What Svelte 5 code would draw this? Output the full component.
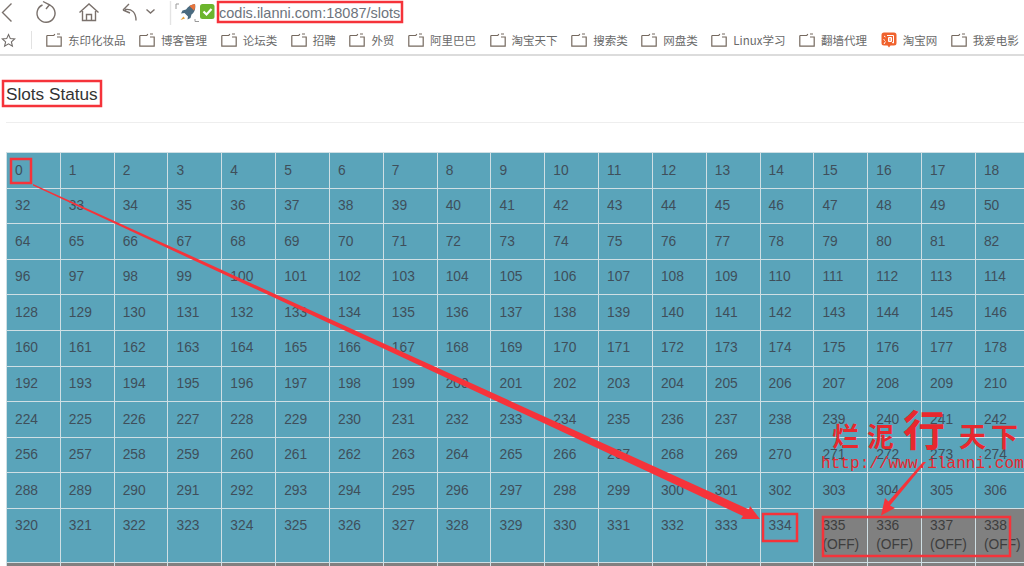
<script>
  const bookmarks = [
    { label: '东印化妆品' },
    { label: '博客管理' },
    { label: '论坛类' },
    { label: '招聘' },
    { label: '外贸' },
    { label: '阿里巴巴' },
    { label: '淘宝天下' },
    { label: '搜索类' },
    { label: '网盘类' },
    { label: 'Linux学习' },
    { label: '翻墙代理' },
    { label: '淘宝网', taobao: true },
    { label: '我爱电影' }
  ];

  const COLS = 32;
  const VISIBLE = 19;
  const LAST_ON = 334;

  // only the first 19 columns fit in the window
  const rows = [];
  for (let r = 0; r < 12; r++) {
    const cells = [];
    for (let c = 0; c < VISIBLE; c++) {
      const slot = r * COLS + c;
      cells.push({ slot, off: slot > LAST_ON });
    }
    rows.push(cells);
  }
</script>

<div class="page">
  <header class="toolbar">
    <svg class="nav" width="225" height="26" viewBox="0 0 225 26" fill="none" stroke="#7a716c" stroke-width="1.4">
      <path d="M11.500 3.500 2.500 12.500 11.500 21.500" />
      <path d="M49 4.800a9 9 0 1 1-6.500 .2" />
      <path d="M43 1.500 49.500 4.800 46 9" />
      <path d="M79.500 12.500 89 4l9.500 8.500M82.500 11v9.500h13V11M86.500 20.500v-6h5v6" />
      <path d="M123 10l6-6M123 10l7 3M125 9.500c7-1 11 3 11 11" />
      <path d="M146.500 9.500l4 3.500 4-3.500" />
      <path d="M170.500 1v24" stroke="#e4e4e4" />
      <path d="M176 9V4h3M195 19v2.500h4" stroke="#999" stroke-width="1" />
      <path d="M195 4c-4 .5-7 2.500-9 5.500l-3.500 1-1.500 3 3.500-.5 3.500 3.500-.5 3 3-1.500 1-3.500c3-2 4.500-6 3.500-10.500z" fill="#4a6b80" stroke="none" />
      <path d="M195 4c-2 .2-4 1-5.500 2l4.500 4.500c1-1.500 1.300-4 1-6.500z" fill="#e8743b" stroke="none" />
      <path d="M183.500 16.500l-3 3.500 4.500-1.500z" fill="#e8a03b" stroke="none" />
      <rect x="200" y="4" width="14.500" height="15" rx="2.500" fill="#6cb52d" stroke="none" />
      <path d="M203.500 11.500l3 3 5-5.500" stroke="#fff" stroke-width="2.200" />
    </svg>
    <span class="url">codis.ilanni.com:18087/slots</span>
  </header>

  <nav class="bookmarks">
    <svg class="star" width="15" height="15" viewBox="0 0 15 15" fill="none" stroke="#6f6a67" stroke-width="1.100">
      <path d="M7.500 1.500 9.300 5.600l4.400.4-3.300 2.900 1 4.300-3.900-2.300-3.900 2.300 1-4.300L1.300 6l4.400-.4z" />
    </svg>
    <span class="divider"></span>
    {#each bookmarks as mark}
      <span class="mark">
        {#if mark.taobao}
          <svg width="16" height="16" viewBox="0 0 16 16">
            <path d="M3 .5h10a2.500 2.500 0 0 1 2.500 2.500v8a2.500 2.500 0 0 1-2.500 2.500H9.500L8 15.500 6.500 13.500H3A2.500 2.500 0 0 1 .5 11V3A2.500 2.500 0 0 1 3 .5z" fill="#f0622d" />
            <path d="M3 4l1.500 1M2.500 7.500 4 8.500M3 12l1.500-2.500M6 3.500h6.500v7.500l-1.500-.5M7.500 5.500v4h3v-4zM9 5v5" fill="none" stroke="#fff" stroke-width="1" />
          </svg>
        {:else}
          <svg width="16" height="14" viewBox="0 0 16 14" fill="none" stroke="#75695f" stroke-width="1.200">
            <path d="M.8 2.500h7l1-1.500M11 1h3M.8 2.500v10.700h14.400V4H11" />
          </svg>
        {/if}
        <span>{mark.label}</span>
      </span>
    {/each}
  </nav>

  <main class="content">
    <h4>Slots Status</h4>
    <hr />
    <div class="slots">
      {#each rows as cells}
        {#each cells as cell}
          <div class="slot" class:off={cell.off}>
            {cell.slot}{#if cell.off}<br />(OFF){/if}
          </div>
        {/each}
      {/each}
    </div>
  </main>

  <!-- hand-drawn annotations on top of the screenshot -->
  <svg class="marks" width="1024" height="566" viewBox="0 0 1024 566">
    <g fill="none" stroke="#f5333a" stroke-width="2.500">
      <rect x="218" y="2" width="184" height="20" />
      <rect x="3" y="81" width="98" height="25" />
      <rect x="11" y="159" width="20" height="24" />
      <rect x="763" y="514" width="34" height="27" />
      <rect x="823" y="517" width="187" height="39" />
    </g>
    <path d="M33 184 749 509.500 750 506 760 519 741 519 743 516 33 185.500z" fill="#f5333a" />
    <path d="M926 462 890 505.500 895 508 881 515.500 885 498 888.500 501.500 923 462z" fill="#f5333a" />
  </svg>

  <div class="stamp">
    <span class="ch one">烂</span>
    <span class="ch two">泥</span>
    <span class="ch big">行</span>
    <span class="ch three">天</span>
    <span class="ch four">下</span>
    <span class="site">http://www.ilanni.com</span>
  </div>
</div>

<style>
  :global(body) {
    margin: 0;
    background: #fff;
  }

  .page {
    position: relative;
    width: 1024px;
    height: 566px;
    overflow: hidden;
    font-family: "Liberation Sans", Arial, sans-serif;
    color: #333;
  }

  .toolbar {
    display: flex;
    align-items: center;
    height: 26px;
  }

  .nav {
    flex: none;
  }

  .url {
    margin-left: -6px;
    font-size: 14.500px;
    color: #6d747c;
    white-space: nowrap;
  }

  .bookmarks {
    display: flex;
    align-items: center;
    height: 30px;
    padding: 0 0 0 1px;
    box-sizing: border-box;
    border-bottom: 2px solid #dcdcdc;
    font-family: "Noto Sans CJK SC", "Liberation Sans", sans-serif;
    font-size: 11.500px;
    color: #6a6a6a;
    white-space: nowrap;
  }

  .star {
    flex: none;
  }

  .divider {
    flex: none;
    width: 1px;
    height: 18px;
    margin: 0 14px 0 15px;
    background: #e2e2e2;
  }

  .mark {
    display: flex;
    flex: none;
    align-items: center;
    gap: 6px;
    margin-right: 13.600px;
  }

  .content {
    padding: 0 0 0 6px;
  }

  h4 {
    margin: 28px 0 0;
    font-size: 17.200px;
    font-weight: 400;
    line-height: 20px;
    color: #333;
  }

  hr {
    height: 1px;
    margin: 18px 0 29px;
    border: 0;
    background: #eeeeee;
  }

  .slots {
    display: grid;
    grid-template-columns: repeat(19, 53.830px);
    width: 1023px;
    border-top: 1px solid #cfdfe4;
    border-left: 1px solid #cfdfe4;
    font-size: 13.800px;
    line-height: 18.600px;
    color: #3f4f5a;
  }

  .slot {
    box-sizing: border-box;
    padding: 8.500px 7px 7.500px 8px;
    border-right: 1px solid #cfdfe4;
    border-bottom: 1px solid #cfdfe4;
    background: #5aa4ba;
    white-space: nowrap;
  }

  .slot.off {
    background: #808080;
    color: #3e3e3e;
  }

  .marks {
    position: absolute;
    top: 0;
    left: 0;
    pointer-events: none;
  }

  .stamp {
    position: absolute;
    top: 400px;
    left: 820px;
    width: 204px;
    height: 80px;
    color: #e8282e;
    font-family: "Noto Sans CJK SC", sans-serif;
    font-weight: 700;
  }

  .ch {
    position: absolute;
    font-size: 27px;
    line-height: 30px;
  }

  .one { left: 12px; top: 21px; }
  .two { left: 47px; top: 21px; }
  .big { left: 83px; top: 5px; font-size: 42px; line-height: 46px; }
  .three { left: 139px; top: 21px; }
  .four { left: 171px; top: 21px; }

  .site {
    position: absolute;
    left: 1px;
    top: 54px;
    font-family: "Liberation Mono", monospace;
    font-size: 16.100px;
    font-weight: 400;
    line-height: 20px;
    white-space: nowrap;
  }
</style>
